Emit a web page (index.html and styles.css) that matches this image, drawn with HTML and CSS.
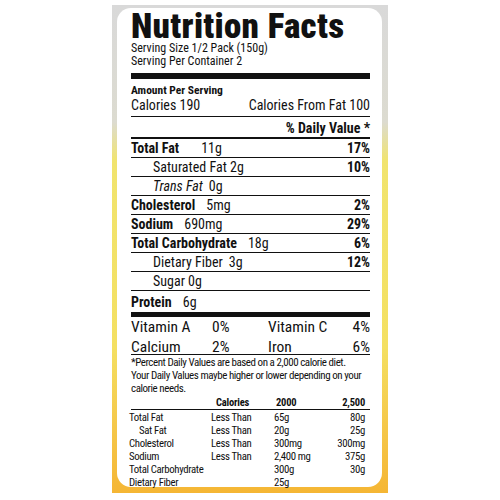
FILE: index.html
```html
<!DOCTYPE html>
<html lang="en">
<head>
    <meta charset="UTF-8">
    <title>Nutrition Facts</title>
    <link rel="stylesheet" href="styles.css">
</head>
<body>
    <div class="panel">
        <div class="facts">
            <h1 class="title">Nutrition Facts</h1>
            <div class="serving">Serving Size 1/2 Pack (150g)</div>
            <div class="serving">Serving Per Container 2</div>
            <div class="bar thick"></div>
            <div class="amount">Amount Per Serving</div>
            <div class="row calories">
                <span>Calories 190</span>
                <span>Calories From Fat 100</span>
            </div>
            <div class="row dv"><span></span><b>% Daily Value *</b></div>
            <div class="row"><span><b>Total Fat</b><span class="amt wide">11g</span></span><b>17%</b></div>
            <div class="row sub"><span>Saturated Fat 2g</span><b>10%</b></div>
            <div class="row sub"><span><i>Trans Fat</i><span class="amt near">0g</span></span></div>
            <div class="row"><span><b>Cholesterol</b><span class="amt">5mg</span></span><b>2%</b></div>
            <div class="row"><span><b>Sodium</b><span class="amt">690mg</span></span><b>29%</b></div>
            <div class="row"><span><b>Total Carbohydrate</b><span class="amt">18g</span></span><b>6%</b></div>
            <div class="row sub"><span>Dietary Fiber<span class="amt near">3g</span></span><b>12%</b></div>
            <div class="row sub"><span>Sugar 0g</span></div>
            <div class="row last"><span><b>Protein</b><span class="amt">6g</span></span></div>
            <div class="bar"></div>
            <div class="vitamins">
                <span>Vitamin A</span><span>0%</span><span>Vitamin C</span><span class="pct">4%</span>
                <span>Calcium</span><span>2%</span><span>Iron</span><span class="pct">6%</span>
            </div>
            <p class="note">*Percent Daily Values are based on a 2,000 calorie diet.<br>
                Your Daily Values maybe higher or lower depending on your<br>
                calorie needs.</p>
            <div class="thead">
                <span></span><b>Calories</b><b>2000</b><b class="pct">2,500</b>
            </div>
            <div class="tbody">
                <span>Total Fat</span><span>Less Than</span><span>65g</span><span class="pct">80g</span>
                <span class="indent">Sat Fat</span><span>Less Than</span><span>20g</span><span class="pct">25g</span>
                <span>Cholesterol</span><span>Less Than</span><span>300mg</span><span class="pct">300mg</span>
                <span>Sodium</span><span>Less Than</span><span>2,400 mg</span><span class="pct">375g</span>
                <span>Total Carbohydrate</span><span></span><span>300g</span><span class="pct">30g</span>
                <span>Dietary Fiber</span><span></span><span>25g</span><span></span>
            </div>
        </div>
    </div>
</body>
</html>
```

FILE: styles.css
```css
* {
    margin: 0;
    padding: 0;
    box-sizing: border-box;
}

body {
    font-family: "Roboto Condensed", "Liberation Sans", sans-serif;
    background-color: #fff;
    color: #111;
}

.panel {
    width: 276px;
    height: 488px;
    margin: 5px auto 0;
    padding: 3px 6px 6px 5px;
    background: linear-gradient(to bottom, #d9d9d9 0%, #dcdbd0 24%, #f1e46e 32%, #f4e062 70%, #f5c84a 86%, #f5b634 100%);
}

.facts {
    height: 100%;
    padding: 4px 12px 0 14px;
    background-color: #fff;
    border-radius: 14px;
}

.title {
    font-size: 35px;
    font-weight: 900;
    line-height: 30px;
    letter-spacing: 0.3px;
    color: #111;
}

.serving {
    font-size: 12px;
    line-height: 13px;
}

.bar {
    height: 4.5px;
    background-color: #111;
}

.bar.thick {
    height: 6px;
    margin-top: 5px;
}

.amount {
    font-size: 11.5px;
    font-weight: bold;
    line-height: 12px;
    margin-top: 4.5px;
}

.row {
    display: flex;
    justify-content: space-between;
    font-size: 14px;
    line-height: 18px;
    height: 19px;
    border-bottom: 1.3px solid #111;
}

.row.calories {
    height: 21px;
    line-height: 16px;
    padding-top: 1px;
}

.row.dv {
    height: 22.5px;
    padding-top: 2px;
    border-bottom-width: 2.5px;
}

.row.sub {
    padding-left: 22px;
}

.row.last {
    border-bottom: none;
    height: 21px;
    padding-top: 2px;
}

.amt {
    margin-left: 11px;
}

.amt.wide {
    margin-left: 22px;
}

.amt.near {
    margin-left: 6px;
}

.vitamins {
    display: grid;
    grid-template-columns: 81px 56px 1fr auto;
    row-gap: 2px;
    height: 38px;
    font-size: 15.5px;
    line-height: 18px;
    padding-top: 1px;
    border-bottom: 1.3px solid #111;
}

.pct {
    text-align: right;
}

.note {
    font-size: 11px;
    line-height: 13px;
    letter-spacing: -0.45px;
    margin-top: 1.5px;
    white-space: nowrap;
}

.thead,
.tbody {
    display: grid;
    grid-template-columns: 82px 63px 1fr auto;
}

.thead {
    font-size: 10.5px;
    line-height: 12px;
    letter-spacing: -0.2px;
    margin-top: 2px;
    padding-right: 5px;
    border-bottom: 1.5px solid #111;
}

.thead b:nth-child(2) {
    margin-left: 3px;
}

.tbody {
    font-size: 10.8px;
    line-height: 13px;
    letter-spacing: -0.35px;
    margin-left: -2px;
    padding-right: 5px;
    padding-top: 1px;
    white-space: nowrap;
}

.indent {
    padding-left: 10px;
}
```
